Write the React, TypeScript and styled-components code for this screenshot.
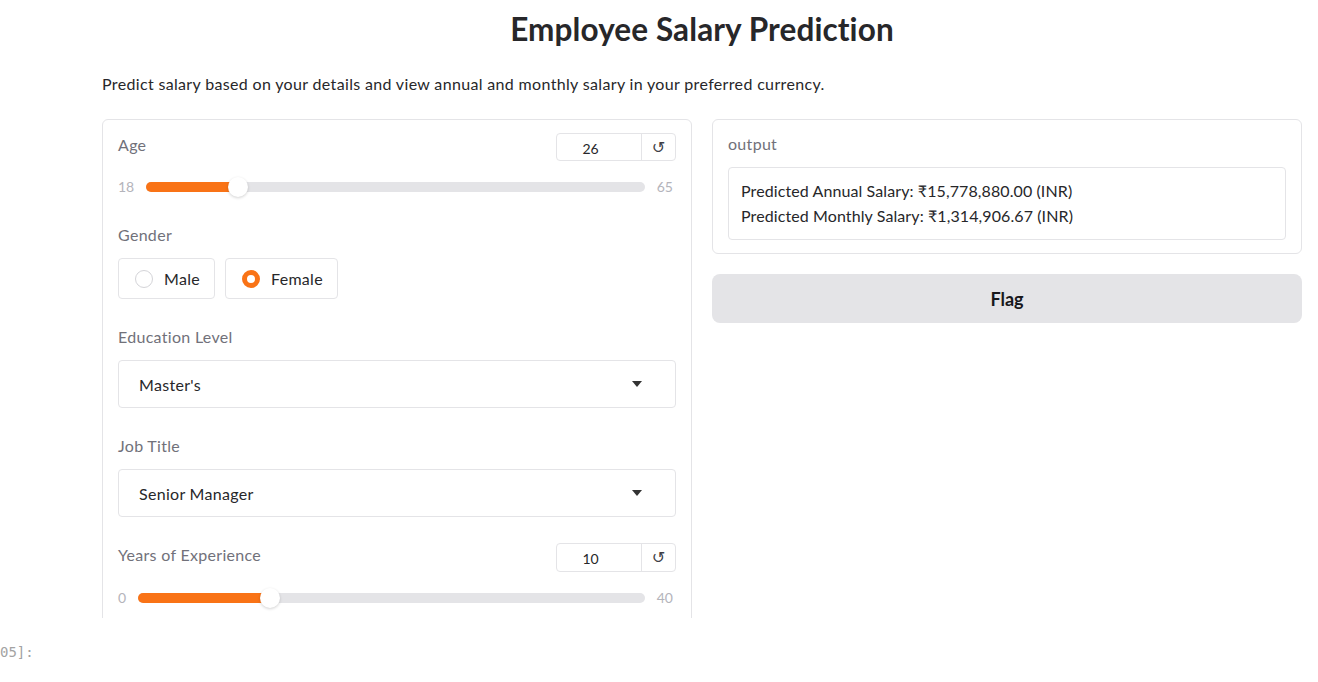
import React from "react";
import styled, { createGlobalStyle } from "styled-components";

const Global = createGlobalStyle`
  html, body { margin: 0; padding: 0; background: #ffffff; }
  body { font-family: "Lato", "Noto Sans", sans-serif; color: #27272a; letter-spacing: 0.3px; }
  * { box-sizing: border-box; }
`;

const Page = styled.div`
  width: 1318px;
  height: 682px;
  overflow: hidden;
  display: flex;
  flex-direction: column;
`;

const Frame = styled.div`
  height: 618px;
  overflow: hidden;
  padding: 0 16px 0 102px;
`;

const App = styled.div`
  width: 1200px;
  display: flex;
  flex-direction: column;
`;

const Title = styled.h1`
  margin: 10px 0 0;
  text-align: center;
  font-size: 31.5px;
  line-height: 38px;
  font-weight: 700;
  letter-spacing: 0.1px;
  color: #27272a;
`;

const Description = styled.p`
  margin: 25px 0 0;
  font-size: 16px;
  line-height: 22px;
  letter-spacing: 0.34px;
  color: #27272a;
`;

const Columns = styled.div`
  margin-top: 24px;
  display: grid;
  grid-template-columns: 1fr 1fr;
  gap: 20px;
  align-items: start;
`;

const Panel = styled.div<{ $open?: boolean }>`
  border: 1px solid #e4e4e7;
  border-radius: 6px;
  background: #fff;
  padding: ${(p) => (p.$open ? "15px 15px 40px" : "14px 15px 13px")};
  display: flex;
  flex-direction: column;
  gap: ${(p) => (p.$open ? "28px" : "13px")};
`;

const Block = styled.div`
  display: flex;
  flex-direction: column;
`;

const Label = styled.div`
  font-size: 16px;
  line-height: 20px;
  color: #71717a;
`;

const HeaderRow = styled.div`
  display: flex;
  justify-content: space-between;
  align-items: flex-start;
`;

const NumberBox = styled.div<{ $h: number }>`
  margin-top: -2px;
  width: 120px;
  height: ${(p) => p.$h}px;
  border: 1px solid #e4e4e7;
  border-radius: 4px;
  display: flex;
  align-items: stretch;
`;

const NumberValue = styled.div`
  width: 85px;
  display: flex;
  align-items: center;
  justify-content: center;
  padding: 2px 17px 0 0;
  font-size: 14px;
  letter-spacing: 0;
  color: #27272a;
  border-right: 1px solid #e4e4e7;
`;

const ResetButton = styled.div`
  flex: 1;
  display: flex;
  align-items: center;
  justify-content: center;
  font-family: "DejaVu Sans", sans-serif;
  font-size: 16px;
  letter-spacing: 0;
  color: #3f3f46;
`;

const SliderRow = styled.div`
  margin: 16px 3px 0 0;
  height: 20px;
  display: flex;
  align-items: center;
  gap: 12px;
`;

const RangeLabel = styled.span`
  font-size: 14px;
  letter-spacing: 0;
  color: #b4b4bb;
  line-height: 20px;
`;

const Track = styled.div`
  position: relative;
  flex: 1;
  height: 10px;
  border-radius: 5px;
  background: #e4e4e7;
`;

const Fill = styled.div`
  position: absolute;
  left: 0;
  top: 0;
  bottom: 0;
  border-radius: 5px;
  background: #f97316;
`;

const Thumb = styled.div`
  position: absolute;
  top: 50%;
  width: 20px;
  height: 20px;
  margin: -10px 0 0 -10px;
  border-radius: 50%;
  background: #fff;
  box-shadow: 0 1px 3px rgba(0, 0, 0, 0.18);
`;

const RadioGroup = styled.div`
  margin-top: 13px;
  display: flex;
  gap: 10px;
`;

const RadioOption = styled.div`
  height: 41px;
  padding: 0 14px 0 16px;
  border: 1px solid #e4e4e7;
  border-radius: 4px;
  display: flex;
  align-items: center;
  gap: 11px;
  font-size: 16px;
  color: #27272a;
`;

const RadioDot = styled.span<{ $checked?: boolean }>`
  width: 18px;
  height: 18px;
  border-radius: 50%;
  border: ${(p) => (p.$checked ? "5px solid #f97316" : "1px solid #d4d4d8")};
  background: #fff;
`;

const Dropdown = styled.div`
  margin-top: 13px;
  height: 48px;
  border: 1px solid #e4e4e7;
  border-radius: 4px;
  display: flex;
  align-items: center;
  justify-content: space-between;
  padding: 0 33px 0 20px;
  font-size: 16px;
  color: #27272a;
`;

const Caret = styled.span`
  width: 0;
  height: 0;
  border-left: 5px solid transparent;
  border-right: 5px solid transparent;
  border-top: 6px solid #333;
`;

const OutputBox = styled.div`
  border: 1px solid #e4e4e7;
  border-radius: 4px;
  padding: 10px 12px 11px;
  font-size: 16px;
  line-height: 25px;
  letter-spacing: 0.1px;
  color: #27272a;
`;

const FlagButton = styled.button`
  margin-top: 20px;
  width: 100%;
  height: 49px;
  border: none;
  border-radius: 8px;
  background: #e4e4e7;
  font-family: inherit;
  font-size: 18px;
  font-weight: 700;
  color: #18181b;
`;

const Prompt = styled.div`
  margin-top: 24px;
  font-family: "DejaVu Sans Mono", monospace;
  font-size: 14px;
  line-height: 20px;
  letter-spacing: 0;
  color: #a3a3a3;
`;

function Slider({ min, max, value }: { min: number; max: number; value: number }) {
  const pct = (value - min) / (max - min);
  const pos = `calc((100% - 20px) * ${pct} + 10px)`;
  return (
    <SliderRow>
      <RangeLabel>{min}</RangeLabel>
      <Track>
        <Fill style={{ width: pos }} />
        <Thumb style={{ left: pos }} />
      </Track>
      <RangeLabel>{max}</RangeLabel>
    </SliderRow>
  );
}

function NumberField({ label, value, min, max, h }: { label: string; value: number; min: number; max: number; h: number }) {
  return (
    <Block>
      <HeaderRow>
        <Label>{label}</Label>
        <NumberBox $h={h}>
          <NumberValue>{value}</NumberValue>
          <ResetButton>↺</ResetButton>
        </NumberBox>
      </HeaderRow>
      <Slider min={min} max={max} value={value} />
    </Block>
  );
}

export default function Main() {
  return (
    <Page>
      <Global />
      <Frame>
        <App>
          <Title>Employee Salary Prediction</Title>
          <Description>
            Predict salary based on your details and view annual and monthly salary in your preferred currency.
          </Description>
          <Columns>
            <Panel $open>
              <NumberField label="Age" value={26} min={18} max={65} h={28} />
              <Block>
                <Label>Gender</Label>
                <RadioGroup>
                  <RadioOption>
                    <RadioDot />
                    Male
                  </RadioOption>
                  <RadioOption>
                    <RadioDot $checked />
                    Female
                  </RadioOption>
                </RadioGroup>
              </Block>
              <Block>
                <Label>Education Level</Label>
                <Dropdown>
                  Master's
                  <Caret />
                </Dropdown>
              </Block>
              <Block>
                <Label>Job Title</Label>
                <Dropdown>
                  Senior Manager
                  <Caret />
                </Dropdown>
              </Block>
              <NumberField label="Years of Experience" value={10} min={0} max={40} h={29} />
            </Panel>
            <div>
              <Panel>
                <Label>output</Label>
                <OutputBox>
                  Predicted Annual Salary: ₹15,778,880.00 (INR)
                  <br />
                  Predicted Monthly Salary: ₹1,314,906.67 (INR)
                </OutputBox>
              </Panel>
              <FlagButton>Flag</FlagButton>
            </div>
          </Columns>
        </App>
      </Frame>
      <Prompt>05]:</Prompt>
    </Page>
  );
}
